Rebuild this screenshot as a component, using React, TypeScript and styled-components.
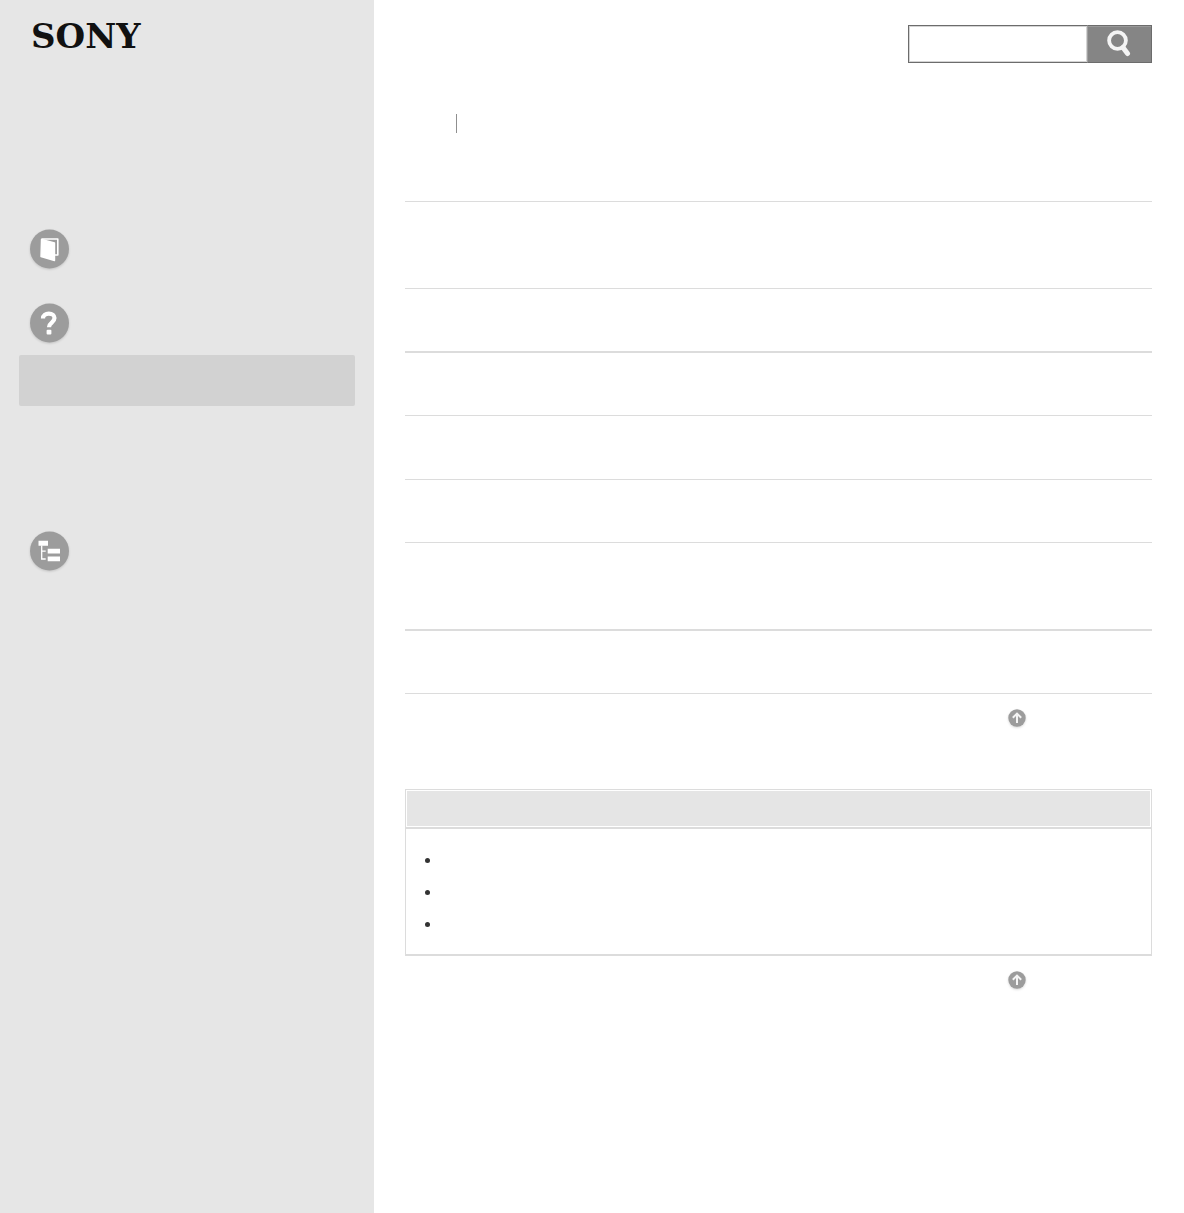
import React from "react";
import styled, { createGlobalStyle } from "styled-components";

const GlobalStyle = createGlobalStyle`
  *, *::before, *::after { box-sizing: border-box; }
  body {
    margin: 0;
    background: #fff;
    color: #333;
    font: 16px/24px "Liberation Sans", Arial, sans-serif;
  }
`;

const Page = styled.div`
  display: flex;
  min-height: 100vh;
`;

const Sidebar = styled.aside`
  flex: 0 0 374px;
  padding: 20px 19px;
  background: #e6e6e6;
`;

const Logo = styled.a`
  display: block;
  width: max-content;
  height: 32px;
  margin-left: 12px;
  color: #111;
  font: bold 34px/32px "DejaVu Serif", "Liberation Serif", serif;
  text-decoration: none;
`;

const Menu = styled.nav`
  display: flex;
  flex-direction: column;
  padding-top: 177px;
`;

const MenuLink = styled.a`
  display: flex;
  height: 40px;
  margin-bottom: 34px;
  padding-left: 10px;

  & + & {
    margin-bottom: 12px;
  }
`;

const CurrentLink = styled.a`
  height: 51px;
  margin-bottom: 125px;
  border-radius: 2px;
  background: #d2d2d2;
`;

const RoundIcon = styled.svg`
  display: block;
  flex: none;
  overflow: visible;
  filter: drop-shadow(0 1px 1px rgba(0, 0, 0, 0.15));
`;

const Main = styled.main`
  flex: 1;
  min-width: 0;
  padding: 25px 32px 32px 31px;
`;

const Search = styled.form`
  display: flex;
  width: 244px;
  height: 38px;
  margin-left: auto;
`;

const SearchInput = styled.input`
  flex: 1;
  min-width: 0;
  padding: 0 8px;
  border: 1px solid #6c6c6c;
  border-right: 0;
  border-radius: 0;
  background: #fff;
  box-shadow: inset 0 0 0 1px #d4d4d4;
  font: inherit;
`;

const SearchButton = styled.button`
  display: flex;
  align-items: center;
  justify-content: center;
  width: 65px;
  padding: 0 2px 2px 0;
  border: 1px solid #6c6c6c;
  border-left-color: #a0a0a0;
  background: #858585;
  box-shadow: inset 0 1px 0 #999;
`;

const LinkBar = styled.div`
  display: flex;
  height: 19px;
  margin: 51px 0 68px;
`;

const LinkCell = styled.div`
  width: 52px;
  border-right: 1px solid #8f8f8f;
`;

const Topics = styled.ul`
  display: grid;
  grid-template-rows: 87px 64px 63px 64px 63px 88px 63px;
  margin: 0;
  padding: 0;
  border-top: 1px solid #dcdcdc;
  list-style: none;
`;

const Topic = styled.li<{ $strong: boolean }>`
  border-bottom: ${(p) => (p.$strong ? 2 : 1)}px solid #dcdcdc;
`;

const TopRow = styled.div`
  display: flex;
  justify-content: flex-end;
  height: 36px;
  padding-top: 15px;
`;

const TopLink = styled.a`
  width: 144px;
`;

const Notice = styled.section`
  margin-top: 59px;
  border: 1px solid #dcdcdc;
  border-bottom-width: 2px;
`;

const NoticeHead = styled.div`
  height: 39px;
  border-bottom: 2px solid #dcdcdc;
  padding: 1px;

  &::before {
    content: "";
    display: block;
    height: 100%;
    background: #e5e5e5;
  }
`;

const NoticeList = styled.ul`
  margin: 0;
  padding: 15px 19px 14px;
  list-style: none;
`;

const NoticeItem = styled.li`
  display: flex;
  align-items: center;
  height: 32px;

  &::before {
    content: "";
    width: 5px;
    height: 5px;
    border-radius: 50%;
    background: #333;
  }
`;

function Disc({ children }: { children: React.ReactNode }) {
  return (
    <RoundIcon width="40" height="40" viewBox="0 0 40 40" aria-hidden="true">
      <circle cx="20.5" cy="20" r="19.5" fill="#9c9c9c" />
      {children}
    </RoundIcon>
  );
}

function UpIcon() {
  return (
    <RoundIcon width="18" height="18" viewBox="0 0 18 18" aria-hidden="true">
      <circle cx="9" cy="9" r="8.7" fill="#9c9c9c" />
      <path d="M9 14V5M4.8 8.8 9 4.6l4.2 4.2" fill="none" stroke="#f4f4f4" strokeWidth="2" />
    </RoundIcon>
  );
}

const strongRows = [false, true, false, false, false, true, false];

export default function App() {
  return (
    <>
      <GlobalStyle />
      <Page id="top">
        <Sidebar>
          <Logo href="#top">SONY</Logo>
          <Menu>
            <MenuLink href="#guide" aria-label="Guide">
              <Disc>
                <path d="M12.5 10h16.3v16H25" fill="none" stroke="#fff" strokeWidth="1.6" strokeLinejoin="round" />
                <path
                  d="M12.5 10.5 25.5 14v17.5l-13.5-4z"
                  fill="#fff"
                  stroke="#fff"
                  strokeWidth="1.4"
                  strokeLinejoin="round"
                />
              </Disc>
            </MenuLink>
            <MenuLink href="#help" aria-label="Help">
              <Disc>
                <path
                  d="M14 15.4c0-3.2 2.5-4.8 5.8-4.8 3.5 0 5.7 1.8 5.7 4.5 0 4.5-5.5 4.5-5.5 9.1"
                  fill="none"
                  stroke="#fff"
                  strokeWidth="4.2"
                />
                <rect x="17.6" y="26.8" width="4.8" height="4.6" rx="1" fill="#fff" />
              </Disc>
            </MenuLink>
            <CurrentLink href="#current" aria-label="Current topic" />
            <MenuLink href="#contents" aria-label="Contents">
              <Disc>
                <path d="M9.5 9.8H19v5H9.500zM18.700 17.800H31v4.700H18.700zM18.700 25.500H31v4.700H18.700z" fill="#fff" />
                <path d="M12.700 14.500v13.500h4M12.700 20.200h4" fill="none" stroke="#fff" strokeWidth="1.3" />
              </Disc>
            </MenuLink>
          </Menu>
        </Sidebar>
        <Main>
          <Search onSubmit={(e) => e.preventDefault()}>
            <SearchInput type="text" aria-label="Search" />
            <SearchButton type="submit" aria-label="Search">
              <svg width="26" height="28" viewBox="0 0 26 28" aria-hidden="true">
                <circle cx="11.5" cy="11.5" r="8.4" fill="none" stroke="#f4f4f4" strokeWidth="3.8" />
                <path d="m17 18.500 4.500 6" stroke="#f4f4f4" strokeWidth="5" strokeLinecap="round" />
              </svg>
            </SearchButton>
          </Search>
          <LinkBar>
            <LinkCell />
          </LinkBar>
          <Topics>
            {strongRows.map((strong, i) => (
              <Topic key={i} $strong={strong} />
            ))}
          </Topics>
          <TopRow>
            <TopLink href="#top" aria-label="Back to top">
              <UpIcon />
            </TopLink>
          </TopRow>
          <Notice>
            <NoticeHead />
            <NoticeList>
              <NoticeItem />
              <NoticeItem />
              <NoticeItem />
            </NoticeList>
          </Notice>
          <TopRow>
            <TopLink href="#top" aria-label="Back to top">
              <UpIcon />
            </TopLink>
          </TopRow>
        </Main>
      </Page>
    </>
  );
}
